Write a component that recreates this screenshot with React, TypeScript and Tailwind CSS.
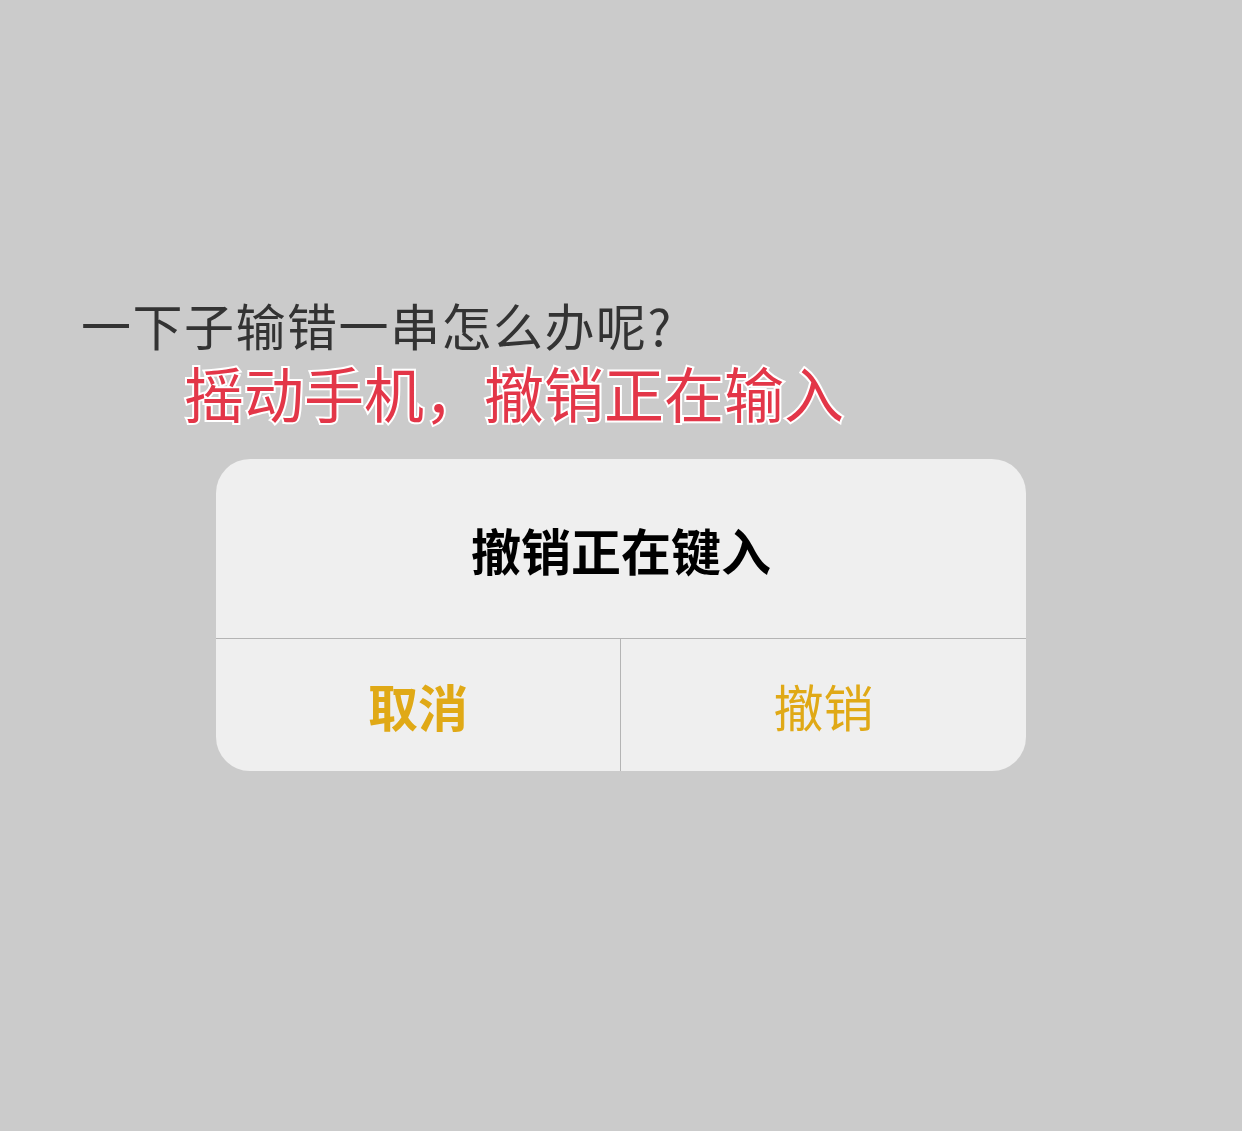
const cjk = "font-['Noto_Sans_CJK_SC','Noto_Sans',sans-serif]";

function UndoAlert() {
  return (
    <div className="ml-[216px] w-[810px] overflow-hidden rounded-[34px] bg-[#efefef]">
      <div className="flex h-[180px] items-center justify-center border-b border-[#b4b4b4]">
        <h2 className="text-[50px] font-bold leading-none text-black">撤销正在键入</h2>
      </div>
      <div className="grid h-[132px] grid-cols-2">
        <button className="border-r border-[#b4b4b4] text-[50px] font-bold leading-none text-[#e0a916]">
          取消
        </button>
        <button className="text-[50px] font-normal leading-none text-[#e0a916]">撤销</button>
      </div>
    </div>
  );
}

export default function App() {
  return (
    <div className={`${cjk} min-h-screen bg-[#cbcbcb] pt-[299px]`}>
      <p className="pl-[81px] text-[50px] leading-none tracking-[1.5px] text-[#333333]">
        一下子输错一串怎么办呢?
      </p>
      <p className="mt-[13px] pl-[184px] text-[60px] font-normal leading-none text-[#e33648] [-webkit-text-stroke:4px_white] [paint-order:stroke_fill]">
        摇动手机，撤销正在输入
      </p>
      <div className="mt-[37px]">
        <UndoAlert />
      </div>
    </div>
  );
}
